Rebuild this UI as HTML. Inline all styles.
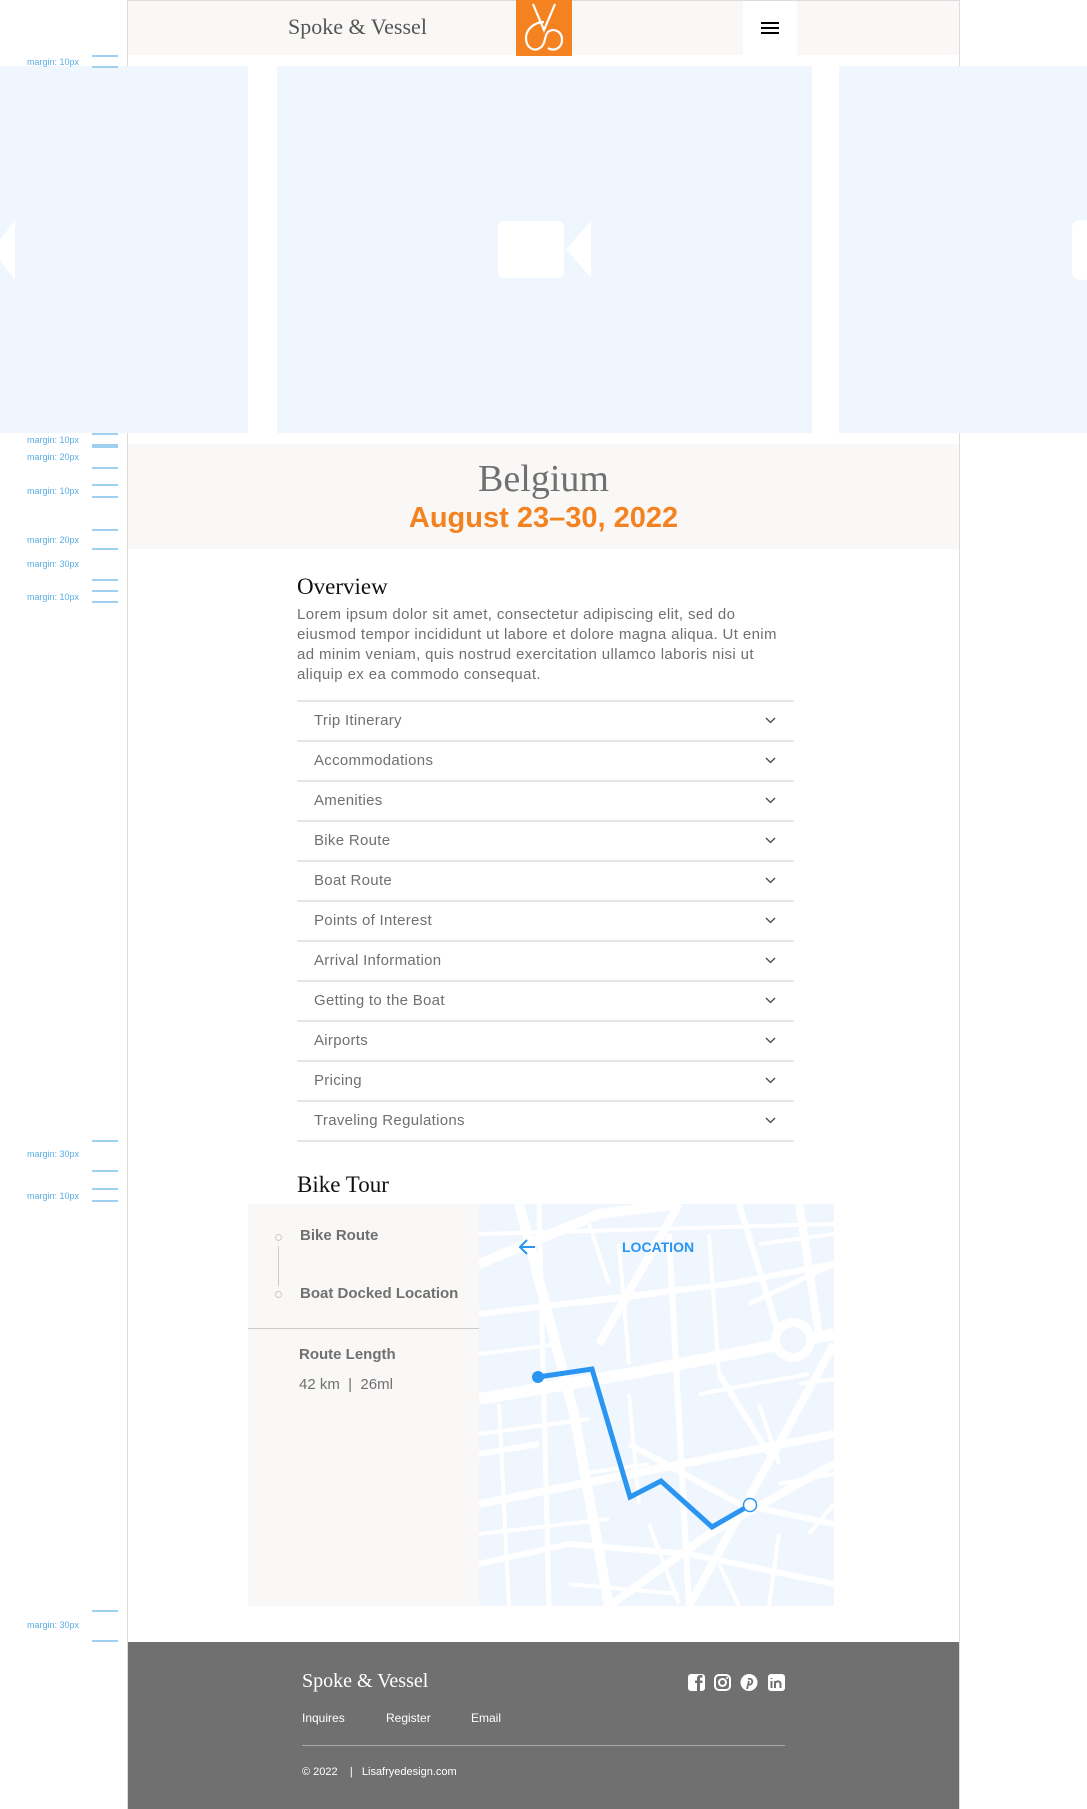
<!DOCTYPE html>
<html><head><meta charset="utf-8"><style>
*{margin:0;padding:0;box-sizing:border-box}
body{width:1087px;height:1809px;position:relative;background:#fff;font-family:"Liberation Sans",sans-serif;overflow:hidden}
.a{position:absolute}
.ann{position:absolute;left:27px;font-size:9px;color:#5aaee6}
.ln{position:absolute;left:92px;width:26px;height:2px;background:#9fd0f0}
.serif{font-family:"Liberation Serif",serif}
.acc{position:absolute;left:297px;width:497px;height:40px;border-top:2px solid #e6e6e6;color:#707070;font-size:15px;letter-spacing:.3px;padding:10px 0 0 17px}
.acc svg{position:absolute;right:18px;top:15px}
</style></head><body>
<div class="a" style="left:127px;top:0;width:833px;height:1809px;border:1px solid #dcdcdc;border-bottom:none"></div>
<div class="a" style="left:128px;top:1px;width:831px;height:54px;background:#f9f8f6"></div>
<div class="a serif" style="left:288px;top:14px;font-size:22px;color:#555">Spoke &amp; Vessel</div>
<div class="a" style="left:516px;top:0;width:56px;height:56px;background:#f58220">
<svg width="56" height="56" viewBox="0 0 56 56" fill="none" stroke="#fff" stroke-width="2.2"><path d="M17 4 L28 30 L39 4"/><path d="M28 22 C20 22 10 28 10 38 C10 48 18 52 24 48 C30 44 28 36 32 32 C36 28 46 30 46 40 C46 48 38 52 32 48"/></svg></div>
<div class="a" style="left:743px;top:1px;width:54px;height:54px;background:#fff"></div>
<div class="a" style="left:761px;top:22px;width:18px;height:2px;background:#000;box-shadow:0 5px 0 #000,0 10px 0 #000"></div>
<!-- hero -->
<div class="a" style="left:0;top:66px;width:248px;height:367px;background:#eff6fd"></div>
<div class="a" style="left:277px;top:66px;width:535px;height:367px;background:#eff6fd"></div>
<div class="a" style="left:839px;top:66px;width:248px;height:367px;background:#eff6fd"></div>
<svg class="a" style="left:498px;top:221px" width="93" height="57"><rect x="0" y="0" width="66" height="57" rx="6" fill="#fff"/><path d="M68 28 L93 0 L93 57Z" fill="#fff"/></svg>
<svg class="a" style="left:0;top:220px" width="15" height="60"><path d="M15 0 L15 60 L0 40 L0 20 Z" fill="#fff"/></svg>
<div class="a" style="left:1072px;top:220px;width:20px;height:60px;background:#fff;border-radius:8px"></div>
<!-- annotations -->
<div class="ann" style="top:57px">margin: 10px</div><div class="ln" style="top:55px"></div><div class="ln" style="top:66px"></div>
<div class="ann" style="top:435px">margin: 10px</div><div class="ln" style="top:433px"></div><div class="ln" style="top:444px;height:4px"></div>
<div class="ann" style="top:452px">margin: 20px</div><div class="ln" style="top:467px"></div>
<div class="ann" style="top:486px">margin: 10px</div><div class="ln" style="top:484px"></div><div class="ln" style="top:496px"></div>
<div class="ann" style="top:535px">margin: 20px</div><div class="ln" style="top:529px"></div><div class="ln" style="top:548px"></div>
<div class="ann" style="top:559px">margin: 30px</div><div class="ln" style="top:579px"></div>
<div class="ann" style="top:592px">margin: 10px</div><div class="ln" style="top:590px"></div><div class="ln" style="top:601px"></div>
<div class="ann" style="top:1149px">margin: 30px</div><div class="ln" style="top:1140px"></div><div class="ln" style="top:1170px"></div>
<div class="ann" style="top:1191px">margin: 10px</div><div class="ln" style="top:1188px"></div><div class="ln" style="top:1200px"></div>
<div class="ann" style="top:1620px">margin: 30px</div><div class="ln" style="top:1610px"></div><div class="ln" style="top:1640px"></div>
<!-- title -->
<div class="a" style="left:128px;top:444px;width:831px;height:105px;background:#f9f8f6"></div>
<div class="a serif" style="left:128px;width:831px;text-align:center;top:457px;font-size:38px;color:#707070">Belgium</div>
<div class="a" style="left:128px;width:831px;text-align:center;top:502px;font-size:29px;font-weight:bold;color:#f58220">August 23–30, 2022</div>
<!-- overview -->
<div class="a serif" style="left:297px;top:574px;font-size:23px;color:#111">Overview</div>
<div class="a" style="left:297px;top:605px;width:500px;font-size:15px;letter-spacing:.38px;line-height:20px;color:#707070">Lorem ipsum dolor sit amet, consectetur adipiscing elit, sed do eiusmod tempor incididunt ut labore et dolore magna aliqua. Ut enim ad minim veniam, quis nostrud exercitation ullamco laboris nisi ut aliquip ex ea commodo consequat.</div>
<div class="acc" style="top:700px">Trip Itinerary<svg width="11" height="7"><path d="M1 1 L5.5 5.5 L10 1" stroke="#444" fill="none" stroke-width="1.3"/></svg></div>
<div class="acc" style="top:740px">Accommodations<svg width="11" height="7"><path d="M1 1 L5.5 5.5 L10 1" stroke="#444" fill="none" stroke-width="1.3"/></svg></div>
<div class="acc" style="top:780px">Amenities<svg width="11" height="7"><path d="M1 1 L5.5 5.5 L10 1" stroke="#444" fill="none" stroke-width="1.3"/></svg></div>
<div class="acc" style="top:820px">Bike Route<svg width="11" height="7"><path d="M1 1 L5.5 5.5 L10 1" stroke="#444" fill="none" stroke-width="1.3"/></svg></div>
<div class="acc" style="top:860px">Boat Route<svg width="11" height="7"><path d="M1 1 L5.5 5.5 L10 1" stroke="#444" fill="none" stroke-width="1.3"/></svg></div>
<div class="acc" style="top:900px">Points of Interest<svg width="11" height="7"><path d="M1 1 L5.5 5.5 L10 1" stroke="#444" fill="none" stroke-width="1.3"/></svg></div>
<div class="acc" style="top:940px">Arrival Information<svg width="11" height="7"><path d="M1 1 L5.5 5.5 L10 1" stroke="#444" fill="none" stroke-width="1.3"/></svg></div>
<div class="acc" style="top:980px">Getting to the Boat<svg width="11" height="7"><path d="M1 1 L5.5 5.5 L10 1" stroke="#444" fill="none" stroke-width="1.3"/></svg></div>
<div class="acc" style="top:1020px">Airports<svg width="11" height="7"><path d="M1 1 L5.5 5.5 L10 1" stroke="#444" fill="none" stroke-width="1.3"/></svg></div>
<div class="acc" style="top:1060px">Pricing<svg width="11" height="7"><path d="M1 1 L5.5 5.5 L10 1" stroke="#444" fill="none" stroke-width="1.3"/></svg></div>
<div class="acc" style="top:1100px;border-bottom:2px solid #e6e6e6;height:42px">Traveling Regulations<svg width="11" height="7"><path d="M1 1 L5.5 5.5 L10 1" stroke="#444" fill="none" stroke-width="1.3"/></svg></div>
<!-- bike tour -->
<div class="a serif" style="left:297px;top:1172px;font-size:23px;color:#111">Bike Tour</div>
<div class="a" style="left:248px;top:1204px;width:231px;height:402px;background:#f9f8f6"></div>
<div class="a" style="left:275px;top:1234px;width:7px;height:7px;border:1px solid #ccc;border-radius:50%"></div>
<div class="a" style="left:278px;top:1246px;width:1px;height:40px;background:#ccc"></div>
<div class="a" style="left:275px;top:1291px;width:7px;height:7px;border:1px solid #ccc;border-radius:50%"></div>
<div class="a" style="left:300px;top:1227px;font-size:15px;font-weight:bold;color:#707070">Bike Route</div>
<div class="a" style="left:300px;top:1285px;font-size:15px;font-weight:bold;color:#707070">Boat Docked Location</div>
<div class="a" style="left:248px;top:1328px;width:231px;height:1px;background:#ccc"></div>
<div class="a" style="left:299px;top:1346px;font-size:15px;font-weight:bold;color:#707070">Route Length</div>
<div class="a" style="left:299px;top:1376px;font-size:15px;color:#707070">42 km &nbsp;| &nbsp;26ml</div>
<svg class="a" style="left:479px;top:1204px" width="355" height="402" viewBox="0 0 355 402">
<rect width="355" height="402" fill="#eff6fd"/>
<g stroke="#fff" fill="none">
<path d="M0 60 L120 10 L200 0" stroke-width="10"/>
<path d="M40 0 L95 210 L130 402" stroke-width="10"/>
<path d="M0 195 L160 168 L355 130" stroke-width="12"/>
<path d="M0 300 L355 230" stroke-width="8"/>
<path d="M120 140 L200 0" stroke-width="8"/>
<path d="M210 402 L355 140" stroke-width="8"/>
<path d="M355 260 L230 330 L130 402" stroke-width="8"/>
<path d="M320 0 L340 130" stroke-width="8"/>
<path d="M190 30 L210 402" stroke-width="6"/>
<path d="M0 110 L250 80 L355 60" stroke-width="6"/>
<path d="M0 360 L90 340 L210 350 L355 380" stroke-width="6"/>
<path d="M150 240 L260 300 L355 320" stroke-width="6"/>
<path d="M260 0 L300 130" stroke-width="6"/>
<path d="M0 250 L60 240" stroke-width="6"/>
<path d="M240 170 L290 250" stroke-width="6"/>
<path d="M60 0 L70 402" stroke-width="5"/>
<path d="M0 30 L355 20" stroke-width="4"/>
<path d="M270 100 L355 60" stroke-width="5"/>
<g stroke-width="4">
<path d="M0 150 L80 140"/><path d="M100 100 L180 90"/><path d="M140 40 L150 160"/><path d="M230 30 L240 170"/>
<path d="M0 230 L110 215"/><path d="M20 200 L30 402"/><path d="M100 270 L170 260"/><path d="M0 330 L130 315"/>
<path d="M150 190 L160 300"/><path d="M220 190 L330 170"/><path d="M280 200 L300 260"/><path d="M300 280 L355 270"/>
<path d="M240 360 L260 402"/><path d="M300 330 L290 402"/><path d="M90 380 L200 390"/><path d="M170 320 L200 400"/>
<path d="M110 20 L130 80"/><path d="M280 40 L355 30"/><path d="M320 180 L355 175"/><path d="M330 330 L355 300"/>
</g>
</g>
<circle cx="314" cy="136" r="22" fill="#fff"/><circle cx="314" cy="136" r="13" fill="#eff6fd"/>
<path d="M59 173 L113 165 L151 293 L182 277 L233 323 L271 301" stroke="#2b95f2" stroke-width="5" fill="none"/>
<circle cx="59" cy="173" r="6" fill="#2b95f2"/>
<circle cx="271" cy="301" r="6.5" fill="#fff" stroke="#2b95f2" stroke-width="1.5"/>
<path d="M48 36 L41 43 L48 50 M41 43 L56 43" stroke="#2b95f2" stroke-width="2" fill="none"/>
<text x="143" y="48" font-family="Liberation Sans" font-weight="bold" font-size="14" fill="#2b95f2">LOCATION</text>
</svg>
<!-- footer -->
<div class="a" style="left:128px;top:1642px;width:831px;height:167px;background:#707070"></div>
<div class="a serif" style="left:302px;top:1670px;font-size:20px;color:#fff">Spoke &amp; Vessel</div>
<div class="a" style="left:302px;top:1711px;font-size:12px;color:#fff">Inquires</div>
<div class="a" style="left:386px;top:1711px;font-size:12px;color:#fff">Register</div>
<div class="a" style="left:471px;top:1711px;font-size:12px;color:#fff">Email</div>
<div class="a" style="left:302px;top:1745px;width:483px;height:1px;background:#aaa"></div>
<div class="a" style="left:302px;top:1766px;font-size:11px;color:#fff">© 2022 &nbsp; &nbsp;| &nbsp; Lisafryedesign.com</div>
<svg class="a" style="left:688px;top:1673px" width="98" height="19" viewBox="0 0 98 19">
<rect x="0" y="1" width="17" height="17" rx="3" fill="#fff"/><path d="M12 18 V10 H14.5 V7.5 H12 V6 C12 5 12.5 4.5 13.5 4.5 H14.5 V2 H12.5 C10 2 9 3.5 9 5.5 V7.5 H7 V10 H9 V18Z" fill="#707070"/>
<rect x="27" y="2" width="15" height="15" rx="4" fill="none" stroke="#fff" stroke-width="2"/><circle cx="34.5" cy="9.5" r="3.5" fill="none" stroke="#fff" stroke-width="2"/><circle cx="39" cy="5" r="1" fill="#fff"/>
<circle cx="61" cy="9.5" r="8.5" fill="#fff"/><path d="M60 6 C63 5 65 7 64 10 C63 12 61 12 60.5 11 M61 8 L59 16" stroke="#707070" stroke-width="1.8" fill="none"/>
<rect x="80" y="1" width="17" height="17" rx="3" fill="#fff"/><path d="M83.5 8 V15 M83.5 5 V6 M87 15 V8 M87 11 C87 8 92.5 7 92.5 11 V15" stroke="#707070" stroke-width="2" fill="none"/>
</svg>
</body></html>
